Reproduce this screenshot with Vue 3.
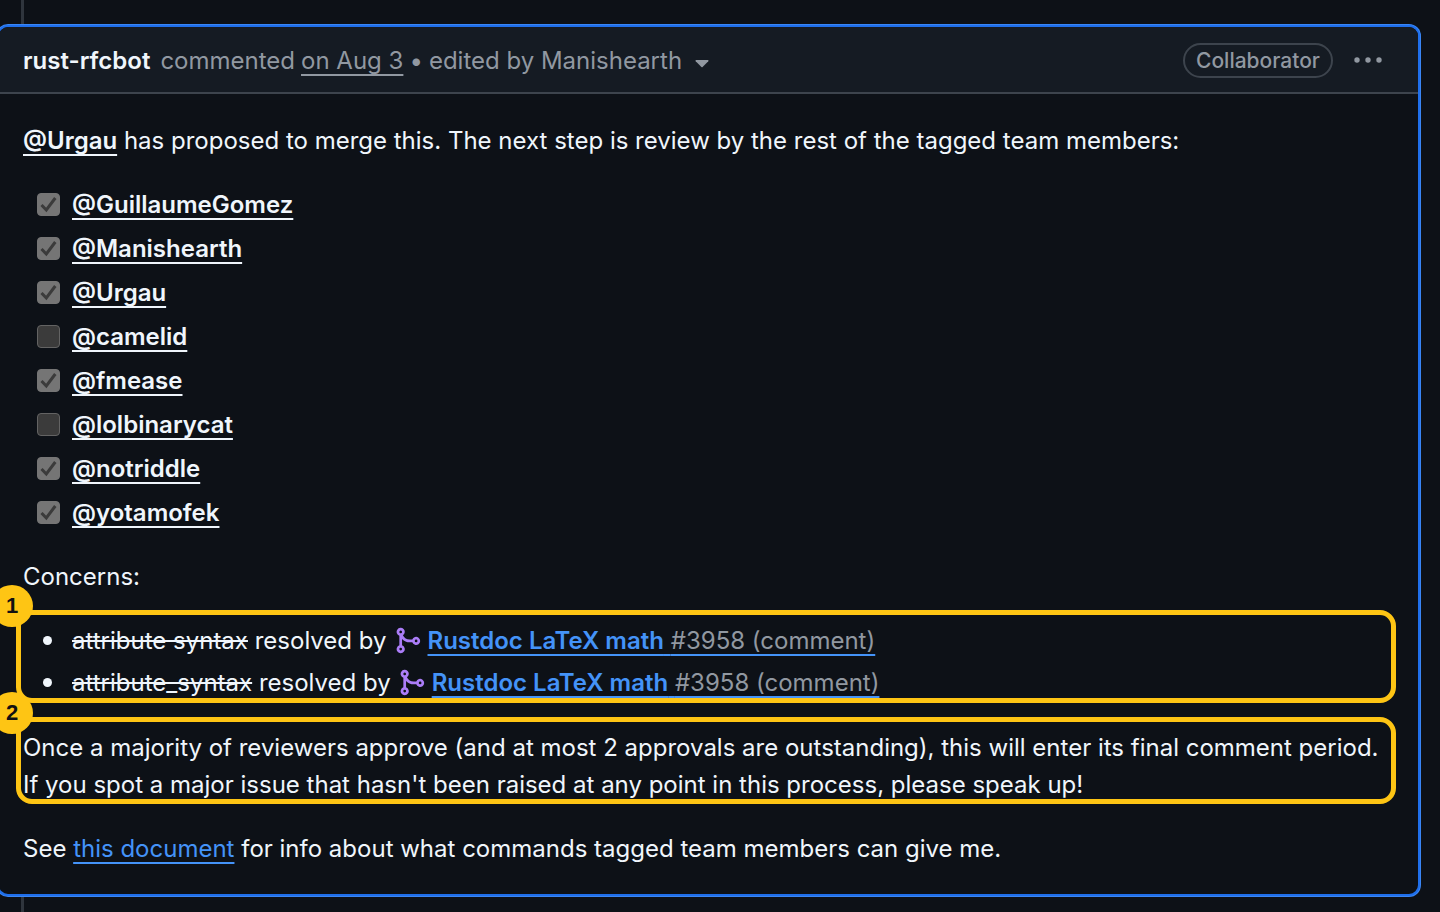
<script setup>
const reviewers = [
  { name: 'GuillaumeGomez', done: true },
  { name: 'Manishearth', done: true },
  { name: 'Urgau', done: true },
  { name: 'camelid', done: false },
  { name: 'fmease', done: true },
  { name: 'lolbinarycat', done: false },
  { name: 'notriddle', done: true },
  { name: 'yotamofek', done: true },
]
const concerns = ['attribute syntax', 'attribute_syntax']
</script>

<template>
  <main class="timeline">
    <article class="comment">
      <header class="head">
        <div class="meta">
          <a class="author" href="#author">rust-rfcbot</a>
          <span>commented</span>
          <a class="when" href="#comment">on Aug 3</a>
          <span>•</span>
          <button class="edited" type="button">
            edited by Manishearth
            <svg class="caret" viewBox="0 0 14 8" aria-hidden="true"><path d="M1 0h12q1 .3 .3 1.200L7.600 7q-.6 .6-1.200 0L.7 1.200Q0 .3 1 0z" /></svg>
          </button>
        </div>
        <div class="actions">
          <span class="role">Collaborator</span>
          <button class="more" type="button" aria-label="Show options">
            <svg viewBox="0 0 30 8" aria-hidden="true"><circle cx="4" cy="4" r="2.700" /><circle cx="15" cy="4" r="2.700" /><circle cx="26" cy="4" r="2.700" /></svg>
          </button>
        </div>
      </header>

      <div class="body">
        <p><a class="mention" href="#Urgau">@Urgau</a> has proposed to merge this. The next step is review by the rest of the tagged team members:</p>

        <ul class="tasks">
          <li v-for="r in reviewers" :key="r.name">
            <span class="tick">
              <input :id="'task-' + r.name" type="checkbox" :checked="r.done" disabled />
              <svg v-if="r.done" viewBox="0 0 23 23" aria-hidden="true"><path d="M4.500 12l4.800 5 9-12" /></svg>
            </span>
            <label :for="'task-' + r.name"><a class="mention" :href="'#' + r.name">@{{ r.name }}</a></label>
          </li>
        </ul>

        <p>Concerns:</p>

        <section class="marked">
          <ul class="concerns">
            <li v-for="c in concerns" :key="c">
              <span><s>{{ c }}</s> resolved by</span>
              <svg class="merge" viewBox="0 0 16 16" aria-hidden="true"><path d="M5.450 5.154A4.250 4.250 0 0 0 9.250 7.500h1.378a2.251 2.251 0 1 1 0 1.500H9.250A5.734 5.734 0 0 1 5 7.123v3.505a2.250 2.250 0 1 1-1.500 0V5.372a2.250 2.250 0 1 1 1.950-.218ZM4.250 13.500a.75.75 0 1 0 0-1.500.75.75 0 0 0 0 1.500Zm8.500-4.500a.75.75 0 1 0 0-1.500.75.75 0 0 0 0 1.500ZM5 3.250a.75.75 0 1 0 0 .005V3.250Z" /></svg>
              <a class="issue" href="#3958"><b>Rustdoc LaTeX math</b> <span class="ref">#3958 (comment)</span></a>
            </li>
          </ul>
          <div class="frame"><span class="num">1</span></div>
        </section>

        <section class="marked">
          <p>Once a majority of reviewers approve (and at most 2 approvals are outstanding), this will enter its final comment period.<br />If you spot a major issue that hasn't been raised at any point in this process, please speak up!</p>
          <div class="frame"><span class="num">2</span></div>
        </section>

        <p>See <a class="doc" href="#document">this document</a> for info about what commands tagged team members can give me.</p>
      </div>
    </article>
  </main>
</template>

<style>
body {
  background: #0d1117;
}
</style>

<style scoped>
.timeline {
  box-sizing: border-box;
  min-height: 100vh;
  padding: 25px 20px 16px 0;
  background: linear-gradient(#2f353d, #2f353d) 21px 0 / 3px 100% no-repeat #0d1117;
  color: #f0f6fc;
  font: 400 24px/37px Inter, "Liberation Sans", sans-serif;
  overflow: hidden;
}
.comment {
  margin-left: -3px;
  border: 2px solid #1f6feb;
  border-radius: 11px;
  background: #0d1117;
  box-shadow: 0 0 0 1px #3a86f5;
}
.head {
  display: flex;
  align-items: center;
  justify-content: space-between;
  padding: 14px 35px 13px 24px;
  border-bottom: 2px solid #3d444d;
  border-radius: 9px 9px 0 0;
  background: #151b23;
  color: #9198a1;
}
.meta {
  display: flex;
  gap: 6px;
  padding-top: 1px;
}
a {
  color: inherit;
  text-decoration: none;
}
button {
  padding: 0;
  border: 0;
  background: none;
  color: inherit;
  font: inherit;
}
.author {
  margin-right: 4px;
  color: #f0f6fc;
  font-weight: 600;
}
.when,
.mention,
.issue,
.doc {
  text-decoration: underline;
  text-decoration-thickness: 2px;
  text-decoration-skip-ink: none;
  text-underline-offset: 5px;
}
.caret {
  width: 14px;
  height: 8px;
  margin-left: 6px;
  vertical-align: 1px;
  fill: currentColor;
}
.actions {
  display: flex;
  align-items: center;
  gap: 20px;
}
.role {
  padding: 0 11px;
  border: 2px solid #3d444d;
  border-radius: 18px;
  font-size: 21px;
  font-weight: 500;
  line-height: 31px;
}
.more {
  display: flex;
}
.more svg {
  width: 30px;
  height: 8px;
  fill: currentColor;
}
.body {
  display: flex;
  flex-direction: column;
  gap: 27px;
  padding: 28px 23px 27px 24px;
}
p,
ul {
  margin: 0;
  padding: 0;
}
ul {
  list-style: none;
}
.tasks {
  display: flex;
  flex-direction: column;
  gap: 7px;
  padding-left: 14px;
}
.tasks li {
  display: flex;
  align-items: center;
  gap: 12px;
}
.mention {
  font-weight: 600;
}
.tick {
  position: relative;
  display: flex;
}
.tick input {
  appearance: none;
  width: 23px;
  height: 23px;
  margin: 0;
  border: 1px solid #636363;
  border-radius: 4px;
  background: #3b3b3b;
}
.tick input:checked {
  background: #757575;
  border-color: #757575;
}
.tick svg {
  position: absolute;
  inset: 0;
  fill: none;
  stroke: #3b3b3b;
  stroke-width: 3;
}
.marked {
  position: relative;
}
.frame {
  position: absolute;
  inset: -12px -1px -1px -7px;
  border: 5px solid #fec514;
  border-radius: 16px;
  pointer-events: none;
}
.num {
  position: absolute;
  top: -30px;
  left: -30px;
  width: 42px;
  border-radius: 50%;
  background: #fec514;
  color: #111;
  font: 700 22px/42px "Liberation Sans", sans-serif;
  text-align: center;
}
.concerns {
  display: flex;
  flex-direction: column;
  gap: 5px;
  padding: 0 0 1px 20px;
}
.concerns li {
  display: flex;
  align-items: center;
  gap: 6px;
}
.concerns li::before {
  content: "";
  width: 9px;
  height: 9px;
  margin-right: 14px;
  border-radius: 50%;
  background: currentColor;
}
.merge {
  width: 29px;
  height: 29px;
  fill: #ab7df8;
}
.issue,
.doc {
  color: #4493f8;
}
.issue b {
  font-weight: 600;
}
.ref {
  color: #9198a1;
}
</style>
